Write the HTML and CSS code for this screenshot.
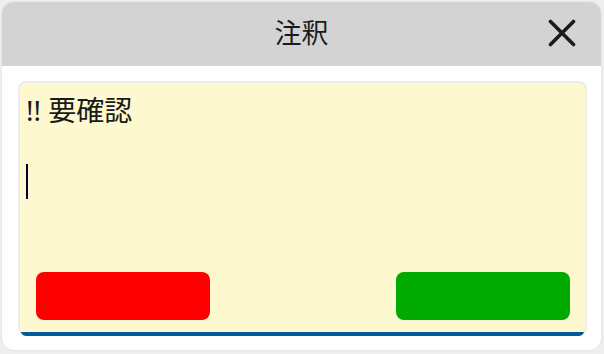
FILE: index.html
```html
<!DOCTYPE html>
<html lang="ja">
<head>
<meta charset="utf-8">
<title>注釈</title>
<link rel="stylesheet" href="styles.css">
</head>
<body>
<div class="dialog">
  <div class="header">
    <div class="spacer"></div>
    <div class="title">注釈</div>
    <div class="actions">
      <button class="close" aria-label="閉じる">
        <svg width="28" height="28" viewBox="0 0 28 28"><path d="M2.5 2.5 L25.5 25.5 M25.5 2.5 L2.5 25.5" stroke="#1a1a1a" stroke-width="3.6" stroke-linecap="round" fill="none"/></svg>
      </button>
    </div>
  </div>
  <div class="body">
    <div class="note">
      <div class="text">
        <div class="line">!! 要確認</div>
        <div class="line">&nbsp;</div>
        <div class="line"><span class="caret"></span></div>
      </div>
      <div class="buttons">
        <button class="btn red" aria-label="削除"></button>
        <button class="btn green" aria-label="保存"></button>
      </div>
      <div class="focusbar"></div>
    </div>
  </div>
</div>
</body>
</html>
```
FILE: styles.css
```css
html, body {
  margin: 0;
  padding: 0;
}
body {
  background: #efefef;
  font-family: "Noto Sans", "Noto Sans CJK JP", sans-serif;
  color: #1a1a1a;
  width: 604px;
  height: 354px;
  overflow: hidden;
}
.dialog {
  margin: 2px 0 0 2px;
  width: 599px;
  height: 348px;
  background: #ffffff;
  border-radius: 12px;
  overflow: hidden;
  display: flex;
  flex-direction: column;
  box-shadow: 0 0 2px rgba(0,0,0,0.12);
}
.header {
  height: 64px;
  flex: none;
  background: #d3d3d3;
  display: grid;
  grid-template-columns: 1fr auto 1fr;
  align-items: center;
}
.title {
  font-size: 27px;
  line-height: 32px;
  color: #1a1a1a;
  padding-bottom: 2px;
}
.actions {
  display: flex;
  justify-content: flex-end;
  padding-right: 25px;
}
.close {
  border: 0;
  background: transparent;
  padding: 0;
  width: 28px;
  height: 28px;
  display: flex;
  align-items: center;
  justify-content: center;
  margin-bottom: 2px;
}
.close svg {
  display: block;
}
.body {
  flex: 1;
  padding: 15px 14px 14px 16px;
  display: flex;
}
.note {
  flex: 1;
  background: #fdf8cf;
  border: 2px solid #ececec;
  border-bottom: 0;
  border-radius: 8px;
  display: flex;
  flex-direction: column;
  overflow: hidden;
}
.text {
  flex: 1;
  padding: 9px 6px 0 6px;
  font-size: 28px;
  line-height: 36px;
  color: #1a1a1a;
}
.line {
  height: 36px;
}
.caret {
  display: inline-block;
  width: 2px;
  height: 35px;
  background: #000033;
  vertical-align: top;
}
.buttons {
  display: flex;
  justify-content: space-between;
  padding: 0 15px 12px 16px;
}
.btn {
  width: 174px;
  height: 48px;
  border: 0;
  border-radius: 8px;
  padding: 0;
}
.red {
  background: #ff0000;
}
.green {
  background: #00aa00;
}
.focusbar {
  height: 4px;
  background: #005a9c;
  margin: 0 1px 0 0;
  border-radius: 0 0 4px 4px;
}
```
